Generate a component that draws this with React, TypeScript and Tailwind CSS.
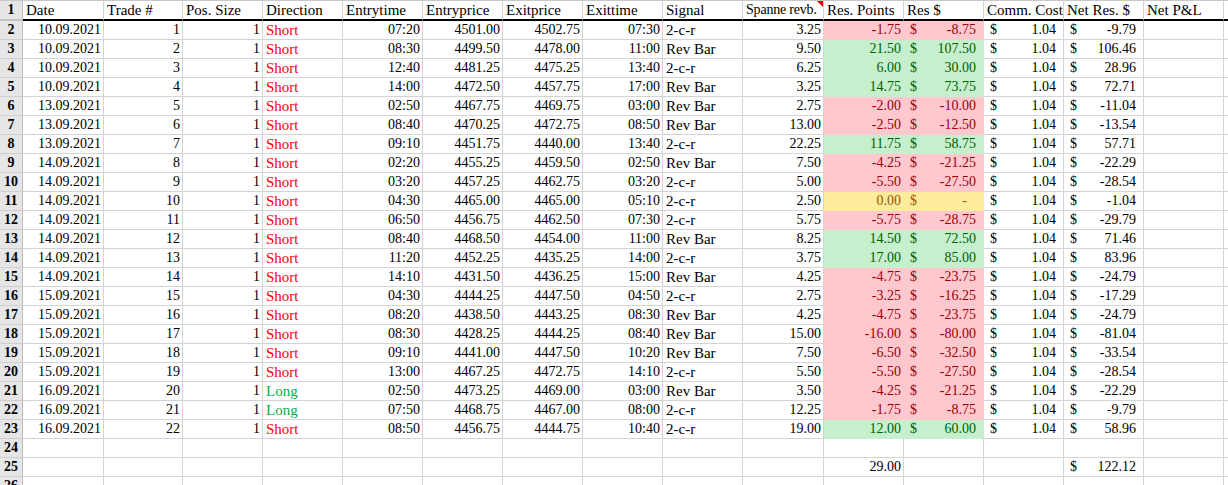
import React from 'react';

type Trade = {
    d: string;
    t: string;
    dir: 'Short' | 'Long';
    et: string;
    ep: string;
    xp: string;
    xt: string;
    sig: string;
    sp: string;
    rp: string;
    rd: string;
    n: string;
};

const trades: Trade[] = [
    { d: '10.09.2021', t: '1', dir: 'Short', et: '07:20', ep: '4501.00', xp: '4502.75', xt: '07:30', sig: '2-c-r', sp: '3.25', rp: '-1.75', rd: '-8.75', n: '-9.79' },
    { d: '10.09.2021', t: '2', dir: 'Short', et: '08:30', ep: '4499.50', xp: '4478.00', xt: '11:00', sig: 'Rev Bar', sp: '9.50', rp: '21.50', rd: '107.50', n: '106.46' },
    { d: '10.09.2021', t: '3', dir: 'Short', et: '12:40', ep: '4481.25', xp: '4475.25', xt: '13:40', sig: '2-c-r', sp: '6.25', rp: '6.00', rd: '30.00', n: '28.96' },
    { d: '10.09.2021', t: '4', dir: 'Short', et: '14:00', ep: '4472.50', xp: '4457.75', xt: '17:00', sig: 'Rev Bar', sp: '3.25', rp: '14.75', rd: '73.75', n: '72.71' },
    { d: '13.09.2021', t: '5', dir: 'Short', et: '02:50', ep: '4467.75', xp: '4469.75', xt: '03:00', sig: 'Rev Bar', sp: '2.75', rp: '-2.00', rd: '-10.00', n: '-11.04' },
    { d: '13.09.2021', t: '6', dir: 'Short', et: '08:40', ep: '4470.25', xp: '4472.75', xt: '08:50', sig: 'Rev Bar', sp: '13.00', rp: '-2.50', rd: '-12.50', n: '-13.54' },
    { d: '13.09.2021', t: '7', dir: 'Short', et: '09:10', ep: '4451.75', xp: '4440.00', xt: '13:40', sig: '2-c-r', sp: '22.25', rp: '11.75', rd: '58.75', n: '57.71' },
    { d: '14.09.2021', t: '8', dir: 'Short', et: '02:20', ep: '4455.25', xp: '4459.50', xt: '02:50', sig: 'Rev Bar', sp: '7.50', rp: '-4.25', rd: '-21.25', n: '-22.29' },
    { d: '14.09.2021', t: '9', dir: 'Short', et: '03:20', ep: '4457.25', xp: '4462.75', xt: '03:20', sig: '2-c-r', sp: '5.00', rp: '-5.50', rd: '-27.50', n: '-28.54' },
    { d: '14.09.2021', t: '10', dir: 'Short', et: '04:30', ep: '4465.00', xp: '4465.00', xt: '05:10', sig: '2-c-r', sp: '2.50', rp: '0.00', rd: '-', n: '-1.04' },
    { d: '14.09.2021', t: '11', dir: 'Short', et: '06:50', ep: '4456.75', xp: '4462.50', xt: '07:30', sig: '2-c-r', sp: '5.75', rp: '-5.75', rd: '-28.75', n: '-29.79' },
    { d: '14.09.2021', t: '12', dir: 'Short', et: '08:40', ep: '4468.50', xp: '4454.00', xt: '11:00', sig: 'Rev Bar', sp: '8.25', rp: '14.50', rd: '72.50', n: '71.46' },
    { d: '14.09.2021', t: '13', dir: 'Short', et: '11:20', ep: '4452.25', xp: '4435.25', xt: '14:00', sig: '2-c-r', sp: '3.75', rp: '17.00', rd: '85.00', n: '83.96' },
    { d: '14.09.2021', t: '14', dir: 'Short', et: '14:10', ep: '4431.50', xp: '4436.25', xt: '15:00', sig: 'Rev Bar', sp: '4.25', rp: '-4.75', rd: '-23.75', n: '-24.79' },
    { d: '15.09.2021', t: '15', dir: 'Short', et: '04:30', ep: '4444.25', xp: '4447.50', xt: '04:50', sig: '2-c-r', sp: '2.75', rp: '-3.25', rd: '-16.25', n: '-17.29' },
    { d: '15.09.2021', t: '16', dir: 'Short', et: '08:20', ep: '4438.50', xp: '4443.25', xt: '08:30', sig: 'Rev Bar', sp: '4.25', rp: '-4.75', rd: '-23.75', n: '-24.79' },
    { d: '15.09.2021', t: '17', dir: 'Short', et: '08:30', ep: '4428.25', xp: '4444.25', xt: '08:40', sig: 'Rev Bar', sp: '15.00', rp: '-16.00', rd: '-80.00', n: '-81.04' },
    { d: '15.09.2021', t: '18', dir: 'Short', et: '09:10', ep: '4441.00', xp: '4447.50', xt: '10:20', sig: 'Rev Bar', sp: '7.50', rp: '-6.50', rd: '-32.50', n: '-33.54' },
    { d: '15.09.2021', t: '19', dir: 'Short', et: '13:00', ep: '4467.25', xp: '4472.75', xt: '14:10', sig: '2-c-r', sp: '5.50', rp: '-5.50', rd: '-27.50', n: '-28.54' },
    { d: '16.09.2021', t: '20', dir: 'Long', et: '02:50', ep: '4473.25', xp: '4469.00', xt: '03:00', sig: 'Rev Bar', sp: '3.50', rp: '-4.25', rd: '-21.25', n: '-22.29' },
    { d: '16.09.2021', t: '21', dir: 'Long', et: '07:50', ep: '4468.75', xp: '4467.00', xt: '08:00', sig: '2-c-r', sp: '12.25', rp: '-1.75', rd: '-8.75', n: '-9.79' },
    { d: '16.09.2021', t: '22', dir: 'Short', et: '08:50', ep: '4456.75', xp: '4444.75', xt: '10:40', sig: '2-c-r', sp: '19.00', rp: '12.00', rd: '60.00', n: '58.96' },
];

const headers = [
    'Date', 'Trade #', 'Pos. Size', 'Direction', 'Entrytime', 'Entryprice', 'Exitprice', 'Exittime',
    'Signal', 'Spanne revb.', 'Res. Points', 'Res $', 'Comm. Cost', 'Net Res. $', 'Net P&L',
];

const widths = [
    'w-[81px]', 'w-[79px]', 'w-[80px]', 'w-[80px]', 'w-[80px]', 'w-[80px]', 'w-[80px]', 'w-[80px]',
    'w-[80px]', 'w-[81px]', 'w-[80px]', 'w-[80px]', 'w-[80px]', 'w-[80px]', 'w-[80px]',
];

const base = 'shrink-0 border-r border-b flex items-center overflow-hidden whitespace-nowrap';
const grid = 'border-[#d4d4d4]';

// conditional formatting, excel style
const fills = {
    red: 'bg-[#ffc7ce] border-[#ffc7ce] text-[#9c0006]',
    green: 'bg-[#c6efce] border-[#c6efce] text-[#006100]',
    yellow: 'bg-[#ffeb9c] border-[#ffeb9c] text-[#9c5700]',
};

function fillFor(rp: string) {
    const v = parseFloat(rp);
    if (v > 0) return fills.green;
    if (v < 0) return fills.red;
    return fills.yellow;
}

function RowNum({ n, head }: { n: number; head?: boolean }) {
    return (
        <div
            className={`w-[23px] shrink-0 flex items-center justify-center bg-[#e6e6e6] border-r border-[#bdbdbd] font-bold ${
                head ? 'border-b-2 border-b-[#c4c4c4]' : 'border-b border-b-[#cfcfcf]'
            }`}
        >
            {n}
        </div>
    );
}

function Num({ w, v, cls = grid }: { w: string; v?: string; cls?: string }) {
    return <div className={`${base} ${w} ${cls} justify-end pr-[2px]`}>{v}</div>;
}

function Txt({ w, v, cls = grid }: { w: string; v?: string; cls?: string }) {
    return <div className={`${base} ${w} ${cls} pl-[3px]`}>{v}</div>;
}

function Acc({ w, v, cls = grid }: { w: string; v: string; cls?: string }) {
    return (
        <div className={`${base} ${w} ${cls} justify-between pl-[6px] ${v === '-' ? 'pr-[16px]' : 'pr-[7px]'}`}>
            <span>$</span>
            <span>{v}</span>
        </div>
    );
}

function Empty({ w }: { w: string }) {
    return <div className={`${base} ${w} ${grid}`} />;
}

function Tail() {
    return <div className={`${base} flex-1 border-r-0 ${grid}`} />;
}

export default function App() {
    return (
        <div className="w-[1228px] h-[485px] overflow-hidden bg-white text-black text-[14px] leading-none font-['Liberation_Serif','Times_New_Roman',serif] border-t border-[#c8c8c8]">
            <div className="flex h-[20px]">
                <RowNum n={1} head />
                {headers.map((h, i) => (
                    <div
                        key={h}
                        className={`${base} ${widths[i]} border-[#d4d4d4] border-b-2 border-b-black pl-[3px] ${
                            i === 9 ? 'relative text-[14px] tracking-[-0.2px]' : 'text-[15px]'
                        }`}
                    >
                        {h}
                        {i === 9 && (
                            <span className="absolute top-0 right-0 w-0 h-0 border-l-[6px] border-l-transparent border-t-[6px] border-t-[#e00000]" />
                        )}
                    </div>
                ))}
                <div className={`${base} flex-1 border-r-0 border-[#d4d4d4] border-b-2 border-b-black`} />
            </div>

            {trades.map((r, i) => {
                const f = fillFor(r.rp);
                return (
                    <div key={r.t} className="flex h-[19px]">
                        <RowNum n={i + 2} />
                        <Num w={widths[0]} v={r.d} />
                        <Num w={widths[1]} v={r.t} />
                        <Num w={widths[2]} v="1" />
                        <Txt
                            w={widths[3]}
                            v={r.dir}
                            cls={`${grid} text-[15px] ${r.dir === 'Long' ? 'text-[#00b050]' : 'text-[#ff0000]'}`}
                        />
                        <Num w={widths[4]} v={r.et} />
                        <Num w={widths[5]} v={r.ep} />
                        <Num w={widths[6]} v={r.xp} />
                        <Num w={widths[7]} v={r.xt} />
                        <Txt w={widths[8]} v={r.sig} cls={`${grid} text-[15px]`} />
                        <Num w={widths[9]} v={r.sp} />
                        <Num w={widths[10]} v={r.rp} cls={f} />
                        <Acc w={widths[11]} v={r.rd} cls={f} />
                        <Acc w={widths[12]} v="1.04" />
                        <Acc w={widths[13]} v={r.n} />
                        <Empty w={widths[14]} />
                        <Tail />
                    </div>
                );
            })}

            <div className="flex h-[19px]">
                <RowNum n={24} />
                {widths.map((w, i) => (
                    <Empty key={i} w={w} />
                ))}
                <Tail />
            </div>

            <div className="flex h-[19px]">
                <RowNum n={25} />
                {widths.slice(0, 10).map((w, i) => (
                    <Empty key={i} w={w} />
                ))}
                <Num w={widths[10]} v="29.00" />
                <Empty w={widths[11]} />
                <Empty w={widths[12]} />
                <Acc w={widths[13]} v="122.12" />
                <Empty w={widths[14]} />
                <Tail />
            </div>

            <div className="flex h-[19px]">
                <RowNum n={26} />
                {widths.map((w, i) => (
                    <Empty key={i} w={w} />
                ))}
                <Tail />
            </div>
        </div>
    );
}
